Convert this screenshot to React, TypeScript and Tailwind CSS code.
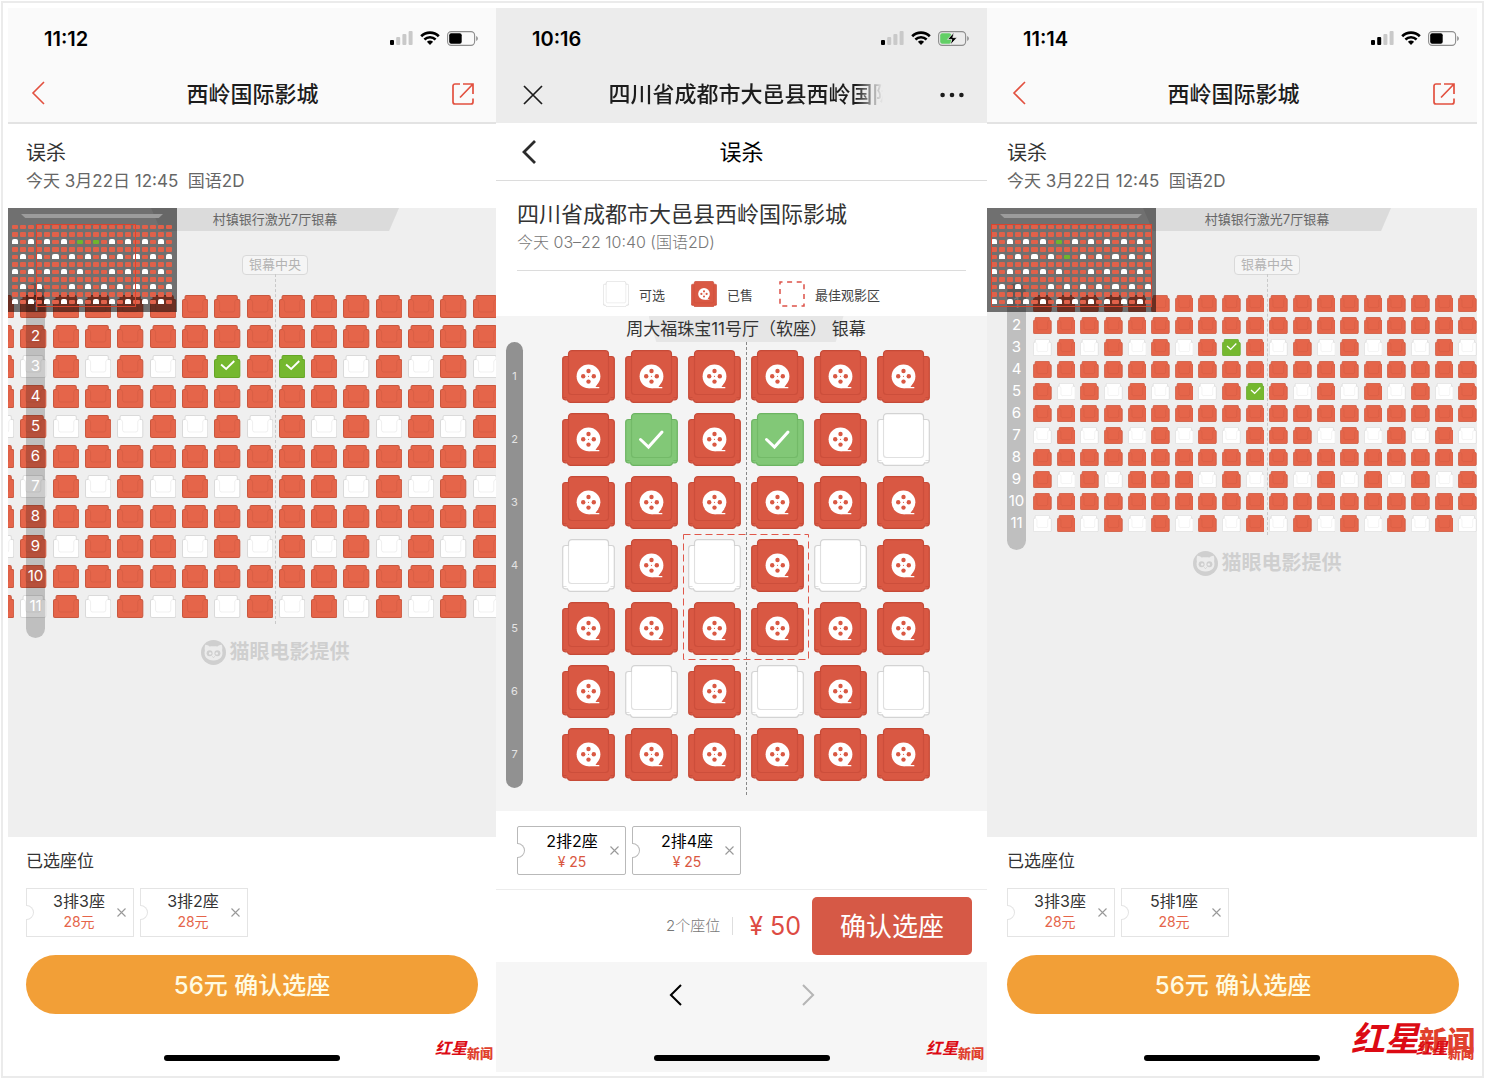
import React from 'react';

type Seat = 'sold' | 'free' | 'picked';

/** Seat rows of hall 7: "x" sold, "o" free, "v" picked. */
const SOLD_ROW = 'xxxxxxxxxxxxxxxxxxxx';
const hallRows = (row3: string, row5: string) => [
  SOLD_ROW,
  SOLD_ROW,
  row3,
  SOLD_ROW,
  row5,
  SOLD_ROW,
  'oxoxoxoxoxxxoxoxoxox',
  SOLD_ROW,
  'xoxoxxxoxoxoxoxoxoxo',
  SOLD_ROW,
  'oxoxoxoxoxoxoxoxoxox',
];

const HALL_A = hallRows('oxoxoxoxvxvxoxoxoxox', 'xoxoxoxoxoxoxoxoxoxo');
const HALL_B = hallRows('oxoxoxoxvxoxoxoxoxox', 'xoxoxoxoxvxoxoxoxoxo');
const HALL_11 = ['xxxxxx', 'xvxvxo', 'xxxxxx', 'oxoxox', 'xxxxxx', 'xoxoxo', 'xxxxxx'];

const toSeat = (c: string): Seat => (c === 'x' ? 'sold' : c === 'v' ? 'picked' : 'free');
const seatLabel: Record<Seat, string> = { sold: '已售', free: '可选', picked: '已选' };

/* ---------- status bar ---------- */

function StatusBar({ time, bars, charging = false }: { time: string; bars: number; charging?: boolean }) {
  return (
    <div className="flex h-[60px] items-center justify-between pr-[18px] pl-[36px]">
      <span className="pt-px text-xl font-semibold text-black">{time}</span>
      <div className="flex items-center gap-[7px]">
        <svg className="h-[14px] w-[23px]" viewBox="0 0 23 14" aria-hidden="true">
          {[5, 8, 11, 14].map((h, i) => (
            <rect key={h} x={i * 6.2} y={14 - h} width="4" height={h} rx="1" fill={i < bars ? '#000' : '#c9c9c9'} />
          ))}
        </svg>
        <svg className="h-[14px] w-[20px]" viewBox="0 0 20 14" aria-hidden="true">
          <path d="M1.2 5.2a12.6 12.6 0 0 1 17.6 0" fill="none" stroke="#000" strokeWidth="2.7" />
          <path d="M4.4 8.5a8 8 0 0 1 11.2 0" fill="none" stroke="#000" strokeWidth="2.5" />
          <path d="M10 14 6.9 10.8a4.6 4.6 0 0 1 6.2 0z" fill="#000" />
        </svg>
        <svg className="h-[15px] w-[31px]" viewBox="0 0 31 15" aria-hidden="true">
          <rect x="0.6" y="0.6" width="27" height="13.8" rx="3.6" fill="none" stroke="#8d8d8d" strokeWidth="1.1" />
          <rect x="2.2" y="2.2" width={charging ? 11 : 12.5} height="10.6" rx="2" fill={charging ? '#62cf66' : '#000'} />
          <path d="M29.2 5v5c1-.4 1.6-1.3 1.6-2.5S30.2 5.4 29.2 5z" fill="#8d8d8d" />
          {charging && (
            <path d="M16.2 1.2 9.5 8.4h4.3l-1.5 5.6 6.8-7.4h-4.3z" fill="#000" stroke="#ececec" strokeWidth="0.8" />
          )}
        </svg>
      </div>
    </div>
  );
}

function Chevron({ className, d, width }: { className: string; d: string; width: number }) {
  return (
    <svg className={className} viewBox="0 0 14 24" fill="none" stroke="currentColor" strokeWidth={width} aria-hidden="true">
      <path d={d} />
    </svg>
  );
}

function HomeBar() {
  return <div className="mx-auto h-[6px] w-[176px] rounded-full bg-black" />;
}

function NewsMark({ large = false }: { large?: boolean }) {
  return large ? (
    <span className="absolute right-[2px] bottom-4 flex items-end leading-none font-black whitespace-nowrap text-[#dc0a14]">
      <span className="text-[34px] font-bold italic">红星</span>
      <span className="text-[28px] text-[#e0402c]">新闻</span>
    </span>
  ) : (
    <span className="absolute right-[3px] bottom-3 flex items-end leading-none font-black whitespace-nowrap text-[#dc0a14]">
      <span className="text-base font-bold italic">红星</span>
      <span className="text-[13px] text-[#e0402c]">新闻</span>
    </span>
  );
}

/* ---------- small hall seats ---------- */

const smallFill: Record<Seat, string> = { sold: '#e5654a', free: '#ffffff', picked: '#75b82f' };
const smallLine: Record<Seat, string> = { sold: '#c9573e', free: '#dadada', picked: '#65a526' };

function SmallSeat({ seat }: { seat: Seat }) {
  return (
    <svg className="block h-full w-full" viewBox="0 0 26 23" preserveAspectRatio="none" aria-hidden="true">
      <path
        d="M4.5.5h17q1.5 0 1.5 1.5v2.5h1q1.5 0 1.5 1.5v15q0 1.5-1.5 1.5H2Q.5 22.5.5 21V6Q.5 4.5 2 4.5h1V2Q3 .5 4.5.5z"
        fill={smallFill[seat]}
        stroke={smallLine[seat]}
      />
      {seat === 'picked' ? (
        <path d="M7 9.5l5 4.500 8-8" fill="none" stroke="#fff" strokeWidth="1.8" />
      ) : (
        <path
          d="M3.5 4.5q2 .5 2 2.5v8q0 2 2 2h11q2 0 2-2V7q0-2 2-2.5"
          fill="none"
          stroke={smallLine[seat]}
          strokeOpacity="0.5"
          strokeWidth="0.8"
        />
      )}
    </svg>
  );
}

const miniColor: Record<Seat, string> = {
  sold: 'bg-[#e0614a] rounded-[1px]',
  free: 'bg-white rounded-t-[2px] -mt-px',
  picked: 'bg-[#6fb52c] rounded-[1px]',
};

function MiniMap({ rows, frame }: { rows: string[]; frame: string }) {
  return (
    <div className="absolute top-0 left-0 h-[104px] w-[169px] bg-black/53 pt-[6px] pr-[5px] pl-[4px]">
      <div className="mx-auto h-[4px] w-[142px] bg-[#9c9c9c] [clip-path:polygon(0_0,100%_0,97%_100%,3%_100%)]" />
      <div className="mt-[7px] grid h-[79px] grid-cols-20 gap-x-[2px] gap-y-[3px]">
        {rows.flatMap((row, r) =>
          row.split('').map((c, i) => <span key={`${r}-${i}`} className={miniColor[toSeat(c)]} />),
        )}
      </div>
      <div className={`absolute top-[16px] h-[83px] border border-[#d8452f] ${frame}`} />
    </div>
  );
}

function CatMark() {
  return (
    <svg className="h-[25px] w-[25px]" viewBox="0 0 25 25" aria-hidden="true">
      <circle cx="12.5" cy="12.5" r="12.5" fill="#cfcfcf" />
      <path
        d="M4.3 4.8c1.700 0 3.200.8 4.200 1.800 2.500-.6 5.500-.6 8 0 1-1 2.500-1.800 4.200-1.800.7 1.900.8 3.800.4 5.400 1.600 6-2.200 10.300-8.600 10.300S2.300 16.200 3.900 10.200c-.4-1.600-.3-3.500.4-5.400z"
        fill="#ececec"
      />
      <circle cx="8.6" cy="13.2" r="3" fill="#cfcfcf" />
      <circle cx="16.4" cy="13.2" r="3" fill="#cfcfcf" />
      <circle cx="9.2" cy="13.4" r="1.2" fill="#efefef" />
      <circle cx="15.8" cy="13.4" r="1.2" fill="#efefef" />
      <path d="M11.300 16.500l1.200 1 1.200-1" fill="none" stroke="#cfcfcf" />
    </svg>
  );
}

interface MapStyle {
  from: number;
  to: number;
  center: string;
  grid: string;
  seat: string;
  axis: string;
  rail: string;
  railRow: string;
  credit: string;
  frame: string;
}

const WIDE: MapStyle = {
  from: 1,
  to: 17,
  center: 'pl-[46px]',
  grid: 'grid-cols-16 gap-x-[6px] gap-y-[7px] -ml-5 -mr-[3px]',
  seat: 'h-[23px]',
  axis: 'h-[350px]',
  rail: 'left-[18px] pt-2 -bottom-5',
  railRow: 'h-[30px]',
  credit: 'mt-5',
  frame: 'left-[28px] w-[100px]',
};

const NARROW: MapStyle = {
  from: 0,
  to: 19,
  center: 'pl-[70px]',
  grid: 'grid-cols-19 gap-x-[5px] gap-y-[5px] ml-[46px]',
  seat: 'h-[17px]',
  axis: 'h-[261px]',
  rail: 'left-[20px] pt-[9px] -bottom-[18px]',
  railRow: 'h-[22px]',
  credit: 'mt-[17px]',
  frame: 'left-[4px] w-[161px]',
};

function HallMap({ rows, map }: { rows: string[]; map: MapStyle }) {
  return (
    <section className="relative min-h-[629px] overflow-hidden bg-[#efefef]" aria-label="选座">
      <div className={`flex flex-col items-center ${map.center}`}>
        <div className="flex h-[23px] w-[248px] items-center justify-center bg-[#dbdbdb] text-[13px] text-[#666] [clip-path:polygon(0_0,100%_0,96%_100%,4%_100%)]">
          村镇银行激光7厅银幕
        </div>
        <div className="relative mt-6 flex h-5 w-[66px] items-center justify-center rounded-[4px] border border-[#d9d9d9] bg-[#f5f5f5] text-[13px] text-[#b3b3b3]">
          银幕中央
          <span className={`absolute top-full left-1/2 border-l border-dashed border-[#c9c9c9] ${map.axis}`} />
        </div>
      </div>
      <div className="relative mt-5">
        <div className={`grid ${map.grid}`}>
          {rows.flatMap((row, r) =>
            row
              .slice(map.from, map.to)
              .split('')
              .map((c, i) => {
                const seat = toSeat(c);
                return (
                  <button
                    key={`${r}-${i}`}
                    type="button"
                    disabled={seat === 'sold'}
                    aria-pressed={seat === 'picked'}
                    aria-label={`${r + 1}排 ${seatLabel[seat]}`}
                    className={map.seat}
                  >
                    <SmallSeat seat={seat} />
                  </button>
                );
              }),
          )}
        </div>
        <div className={`absolute -top-3 w-[19px] rounded-full bg-black/20 text-center text-[15px] text-white ${map.rail}`}>
          {rows.map((_, r) => (
            <div key={r} className={`flex items-center justify-center ${map.railRow}`}>
              {r + 1}
            </div>
          ))}
        </div>
      </div>
      <div className={`flex items-center justify-center gap-1 text-xl font-bold text-[#cfcfcf] ${map.credit} ${map.center}`}>
        <CatMark />
        猫眼电影提供
      </div>
      <MiniMap rows={rows} frame={map.frame} />
    </section>
  );
}

/* ---------- tickets ---------- */

function Ticket({ name, price, dark = false }: { name: string; price: string; dark?: boolean }) {
  const line = dark ? 'border-[#b9b9b9]' : 'border-[#e4e4e4]';
  return (
    <div
      className={`relative flex h-[49px] items-center border bg-white ${line} ${dark ? 'w-[109px] rounded-[2px]' : 'w-[108px] pr-px'}`}
    >
      <span className={`absolute top-[16px] -left-px h-[15px] w-[8px] rounded-r-full border border-l-0 bg-white ${line}`} />
      <div className={`flex-1 text-center ${dark ? 'pl-[22px]' : 'pb-[3px] pl-[20px]'}`}>
        <div className={`text-base leading-[22px] ${dark ? 'text-black' : 'text-[#333]'}`}>{name}</div>
        <div className={`text-sm leading-5 ${dark ? 'text-[#d95741]' : 'text-[#e5654a]'}`}>{price}</div>
      </div>
      <button type="button" aria-label={`取消 ${name}`} className="flex h-5 w-[21px] items-center justify-center text-[#999]">
        <svg className="h-[9px] w-[9px]" viewBox="0 0 9 9" stroke="currentColor" strokeWidth="1.1" aria-hidden="true">
          <path d="M.5.5l8 8M8.5.5l-8 8" />
        </svg>
      </button>
    </div>
  );
}

/* ---------- left and right phones ---------- */

interface AppPhoneProps {
  time: string;
  bars: number;
  rows: string[];
  map: MapStyle;
  tickets: string[];
  inset: string;
  navInset: string;
  large?: boolean;
}

function AppPhone({ time, bars, rows, map, tickets, inset, navInset, large = false }: AppPhoneProps) {
  return (
    <article className="relative min-w-0 bg-white">
      <header className="bg-[#fafafa]">
        <StatusBar time={time} bars={bars} />
        <div
          className={`flex h-[56px] items-center justify-between border-b-2 border-[#e3e3e3] pr-[22px] pb-[2px] text-[#e2503f] ${navInset}`}
        >
          <button type="button" aria-label="返回" className="flex w-[22px] pb-[2px]">
            <Chevron className="h-6 w-[14px]" d="M13 1 2 12l11 11" width={1.6} />
          </button>
          <h1 className="text-[22px] font-medium text-[#1c1c1c]">西岭国际影城</h1>
          <button type="button" aria-label="分享">
            <svg className="h-[22px] w-[22px]" viewBox="0 0 22 22" fill="none" stroke="currentColor" strokeWidth="1.7" aria-hidden="true">
              <path d="M8 1H3a2 2 0 0 0-2 2v16a2 2 0 0 0 2 2h16a2 2 0 0 0 2-2v-3.5M11 1h10v10M21 1 8 14.5" />
            </svg>
          </button>
        </div>
      </header>
      <div className={`pt-[15px] pr-[18px] pb-[13px] ${inset}`}>
        <h2 className="text-xl leading-7 text-[#333]">误杀</h2>
        <p className="text-[17px] leading-7 whitespace-pre text-[#666]">今天 3月22日 12:45  国语2D</p>
      </div>
      <HallMap rows={rows} map={map} />
      <footer className="pb-[11px]">
        <div className={`pt-3 pr-[18px] ${inset}`}>
          <h3 className="text-[17px] leading-6 text-[#333]">已选座位</h3>
          <div className="mt-[15px] flex gap-[6px]">
            {tickets.map((t) => (
              <Ticket key={t} name={t} price="28元" />
            ))}
          </div>
          <button
            type="button"
            className="mt-[18px] mb-[41px] h-[59px] w-full rounded-full bg-[#f29f37] pt-[2px] text-2xl font-medium text-[#fffbe2]"
          >
            56元 确认选座
          </button>
        </div>
        <HomeBar />
      </footer>
      {large && <NewsMark large />}
      <NewsMark />
    </article>
  );
}

/* ---------- middle phone ---------- */

const bigFill: Record<Seat, string> = { sold: '#d95843', free: '#ffffff', picked: '#82c877' };
const bigLine: Record<Seat, string> = { sold: '#c64a37', free: '#d3d3d3', picked: '#6cb462' };

function BigSeat({ seat }: { seat: Seat }) {
  const line = bigLine[seat];
  return (
    <svg className="block h-full w-full" viewBox="0 0 53 53" aria-hidden="true">
      <path
        d="M10 .7h33q3.5 0 3.5 3.5v2.3h3q2.8 0 2.8 2.8v38q0 2.5-2.5 2.5h-2.3q-.5 2.5-3 2.5H8.5q-2.5 0-3-2.5H3.2Q.7 49.8.7 47.3v-38q0-2.8 2.8-2.8h3V4.2Q6.5.7 10 .7z"
        fill={bigFill[seat]}
        stroke={line}
        strokeWidth="1.2"
      />
      <path
        d="M6.5 6.5v35q0 3 3 3h34q3 0 3-3v-35M1 47.5h3.5M48.5 47.5H52"
        fill="none"
        stroke={line}
        strokeWidth="1.1"
        strokeOpacity="0.7"
      />
      {seat === 'picked' && (
        <path d="M15.5 26.500l8 7.500 13.500-15" fill="none" stroke="#fff" strokeWidth="3" strokeLinecap="round" />
      )}
      {seat === 'sold' && (
        <>
          <circle cx="26.5" cy="26.3" r="11.9" fill="#fff" />
          <path d="M26.5 38.200h10.800v-1.200h-3.800l2-3.500-4 1z" fill="#fff" />
          <g fill={bigFill.sold}>
            <circle cx="26.5" cy="21" r="2.2" />
            <circle cx="26.5" cy="31.6" r="2.2" />
            <circle cx="21.2" cy="26.3" r="2.2" />
            <circle cx="31.8" cy="26.3" r="2.2" />
            <circle cx="26.5" cy="26.3" r="0.6" />
          </g>
        </>
      )}
    </svg>
  );
}

function Legend() {
  return (
    <ul className="flex h-[45px] items-center justify-center gap-[26px] text-[13px] text-[#444]">
      <li className="flex items-center gap-[10px]">
        <span className="size-[26px]">
          <BigSeat seat="free" />
        </span>
        <span className="pt-1">可选</span>
      </li>
      <li className="flex items-center gap-[10px]">
        <span className="size-[26px]">
          <BigSeat seat="sold" />
        </span>
        <span className="pt-1">已售</span>
      </li>
      <li className="flex items-center gap-[10px]">
        <svg className="size-[26px]" viewBox="0 0 26 26" aria-hidden="true">
          <rect x="1" y="1" width="24" height="24" fill="none" stroke="#dd5248" strokeWidth="1.5" strokeDasharray="5 4.6" strokeDashoffset="2.5" />
        </svg>
        <span className="pt-1">最佳观影区</span>
      </li>
    </ul>
  );
}

function WebPhone() {
  return (
    <article className="relative min-w-0 bg-white">
      <header className="bg-[#ececec]">
        <StatusBar time="10:16" bars={1} charging />
        <div className="flex h-[55px] items-center justify-between pr-[23px] pb-[2px] pl-[27px] text-[#1c1c1c]">
          <button type="button" aria-label="关闭">
            <svg className="h-5 w-5" viewBox="0 0 20 20" stroke="currentColor" strokeWidth="1.7" aria-hidden="true">
              <path d="M1 1l18 18M19 1 1 19" />
            </svg>
          </button>
          <h1 className="ml-2 w-[274px] overflow-hidden text-[22px] font-medium whitespace-nowrap [mask-image:linear-gradient(to_right,black_90%,transparent)]">
            四川省成都市大邑县西岭国际影城
          </h1>
          <button type="button" aria-label="更多">
            <svg className="h-[6px] w-6" viewBox="0 0 24 6" fill="currentColor" aria-hidden="true">
              <circle cx="2.6" cy="3" r="2.3" />
              <circle cx="12" cy="3" r="2.3" />
              <circle cx="21.4" cy="3" r="2.3" />
            </svg>
          </button>
        </div>
      </header>
      <div className="flex h-[58px] items-center justify-between border-b border-[#dcdcdc] px-[26px]">
        <button type="button" aria-label="返回" className="text-[#2b2b2b]">
          <Chevron className="h-6 w-[14px]" d="M13 1 2 12l11 11" width={2.8} />
        </button>
        <h2 className="pt-[2px] text-[22px] text-black">误杀</h2>
        <span className="w-[14px]" />
      </div>
      <div className="px-[21px]">
        <div className="border-b border-[#dcdcdc] pt-[17px] pb-4">
          <h3 className="text-[22px] leading-8 text-[#333]">四川省成都市大邑县西岭国际影城</h3>
          <p className="text-base leading-6 font-light text-[#777]">今天 03–22 10:40 (国语2D)</p>
        </div>
      </div>
      <Legend />
      <section className="relative bg-[#f4f4f4] pr-[57px] pb-[30px] pl-[66px]" aria-label="选座">
        <div className="flex h-[26px] justify-center">
          <div className="w-[195px] bg-[#e6e6e6] [clip-path:polygon(0_0,100%_0,96%_100%,4%_100%)]" />
          <div className="absolute flex h-7 items-center text-[17px] whitespace-pre text-[#333]">周大福珠宝11号厅（软座） 银幕</div>
        </div>
        <div className="relative mt-2 grid grid-cols-6 gap-[10px]">
          {HALL_11.flatMap((row, r) =>
            row.split('').map((c, i) => {
              const seat = toSeat(c);
              return (
                <button
                  key={`${r}-${i}`}
                  type="button"
                  disabled={seat === 'sold'}
                  aria-pressed={seat === 'picked'}
                  aria-label={`${r + 1}排${i + 1}座 ${seatLabel[seat]}`}
                  className="h-[53px]"
                >
                  <BigSeat seat={seat} />
                </button>
              );
            }),
          )}
          <span className="absolute -top-2 -bottom-[14px] left-1/2 border-l border-dashed border-[#888]" />
          <svg
            className="absolute -inset-[5px] col-start-3 col-end-5 row-start-4 row-end-6 h-[126px] w-[126px]"
            viewBox="0 0 126 126"
            aria-hidden="true"
          >
            <rect x="0.5" y="0.5" width="125" height="125" fill="none" stroke="#e0574a" strokeDasharray="7 4" />
          </svg>
        </div>
        <div className="absolute top-[26px] bottom-[23px] left-[10px] flex w-[17px] flex-col gap-[10px] rounded-full bg-[#919191] pt-2 text-[11px] text-[#e4e4e4]">
          {HALL_11.map((_, r) => (
            <div key={r} className="flex h-[53px] items-center justify-center">
              {r + 1}
            </div>
          ))}
        </div>
      </section>
      <div className="flex gap-[6px] px-[21px] pt-[15px] pb-[14px]">
        <Ticket name="2排2座" price="¥ 25" dark />
        <Ticket name="2排4座" price="¥ 25" dark />
      </div>
      <div className="flex items-center justify-end border-t border-[#ececec] py-[7px] pr-[15px]">
        <span className="text-[15px] font-light text-[#777]">2个座位</span>
        <span className="ml-3 h-[18px] border-l border-[#dedede]" />
        <span className="mr-[11px] ml-4 pt-[2px] text-[25px] text-[#dd4b43]">¥ 50</span>
        <button type="button" className="h-[58px] w-[160px] rounded-[5px] bg-[#d65946] text-[26px] text-white">
          确认选座
        </button>
      </div>
      <footer className="bg-[#f6f6f6] pb-[11px]">
        <div className="mb-[27px] flex h-[66px] items-center justify-center gap-[120px]">
          <button type="button" aria-label="后退" className="text-black">
            <Chevron className="h-[22px] w-[13px]" d="M13 1 2 12l11 11" width={2.2} />
          </button>
          <button type="button" aria-label="前进" className="text-[#b5b5b5]">
            <Chevron className="h-[22px] w-[13px]" d="M1 1l11 11L1 23" width={2.2} />
          </button>
        </div>
        <HomeBar />
      </footer>
      <NewsMark />
    </article>
  );
}

export default function App() {
  return (
    <div className="bg-white pt-px pr-[2px] pb-[2px] pl-px font-['Inter','Noto_Sans_CJK_SC',sans-serif]">
      <main className="grid grid-cols-[488fr_491fr_490fr] border-2 border-[#ebebeb] px-[5px] pt-[5px] pb-1">
        <AppPhone
          time="11:12"
          bars={1}
          rows={HALL_A}
          map={WIDE}
          tickets={['3排3座', '3排2座']}
          inset="pl-[18px]"
          navInset="pl-[23px]"
        />
        <WebPhone />
        <AppPhone
          time="11:14"
          bars={2}
          rows={HALL_B}
          map={NARROW}
          tickets={['3排3座', '5排1座']}
          inset="pl-5"
          navInset="pl-[25px]"
          large
        />
      </main>
    </div>
  );
}
